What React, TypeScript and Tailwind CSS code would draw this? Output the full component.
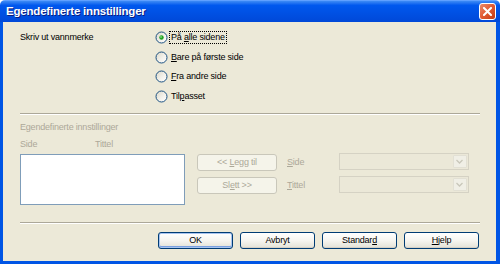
import React from "react";

const font = { fontFamily: '"Liberation Sans", Arial, sans-serif' };

function U({ children }: { children: React.ReactNode }) {
  return <span className="underline underline-offset-[1px]">{children}</span>;
}

function Radio({ checked }: { checked?: boolean }) {
  return (
    <svg width="13" height="13" viewBox="0 0 13 13" className="shrink-0">
      <defs>
        <linearGradient id={checked ? "rgc" : "rg"} x1="0" y1="0" x2="1" y2="1">
          <stop offset="0" stopColor="#DCD8C8" />
          <stop offset="0.6" stopColor="#F4F3EE" />
          <stop offset="1" stopColor="#FFFFFF" />
        </linearGradient>
      </defs>
      <circle cx="6.5" cy="6.5" r="5.5" fill={`url(#${checked ? "rgc" : "rg"})`} stroke="#1C5180" strokeWidth="1" />
      {checked && <circle cx="6.5" cy="6.5" r="2.2" fill="#21A121" />}
      {checked && <circle cx="6" cy="6" r="0.9" fill="#7FD97F" />}
    </svg>
  );
}

function RadioRow({ checked, children }: { checked?: boolean; children: React.ReactNode }) {
  return (
    <div className="h-[19.5px] flex items-center">
      <Radio checked={checked} />
      <span
        className={`ml-[2px] px-[1px] leading-[11px] ${checked ? "outline outline-1 outline-dotted outline-black" : ""}`}
      >
        {children}
      </span>
    </div>
  );
}

function Sep() {
  return <div className="border-t border-[#ACA899] border-b border-b-white" />;
}

function DisabledBtn({ children }: { children: React.ReactNode }) {
  return (
    <div className="w-[80px] h-[17px] rounded-[3px] border border-[#C9C7BA] bg-[#F5F4EA] text-[#ACA899] flex items-center justify-center">
      <span className="whitespace-pre">{children}</span>
    </div>
  );
}

function Combo() {
  return (
    <div className="w-[130px] h-[17px] border border-[#D5D2C4] bg-[#EBE8D8] flex justify-end items-stretch p-[1px]">
      <div className="w-[14px] border border-[#E2E0D4] bg-[#F0EFE6] rounded-[1px] flex items-center justify-center">
        <svg width="7" height="5" viewBox="0 0 7 5">
          <path d="M0.5 1 L3.5 4 L6.5 1" fill="none" stroke="#C9C7BA" strokeWidth="1.3" />
        </svg>
      </div>
    </div>
  );
}

function Btn({ children, def }: { children: React.ReactNode; def?: boolean }) {
  return (
    <div
      className={`w-[75px] h-[17px] rounded-[3px] border border-[#003C74] bg-gradient-to-b from-white via-[#F6F5F0] to-[#E3E1D6] flex items-center justify-center text-black ${
        def ? "shadow-[inset_0_0_0_1px_#A7C4F0,inset_0_-1px_0_1px_#7AA0E0]" : "shadow-[inset_0_-1px_0_#D6D0C5]"
      }`}
    >
      <span>{children}</span>
    </div>
  );
}

export default function App() {
  return (
    <div className="w-[500px] h-[264px] bg-white" style={font}>
      <div className="w-[500px] h-[264px] flex flex-col rounded-t-[5px] overflow-hidden">
        {/* Title bar */}
        <div className="h-[22px] shrink-0 flex items-center bg-gradient-to-b from-[#3D8BF5] via-[#0058EE] via-20% to-[#0048D8] border-t border-[#5FA0FF]">
          <span className="ml-[6px] text-white font-bold text-[11.5px] tracking-[-0.2px] [text-shadow:1px_1px_0_#0A1E80]">
            Egendefinerte innstillinger
          </span>
          <div className="ml-auto mr-[4px] w-[17px] h-[17px] rounded-[3px] border border-white bg-gradient-to-br from-[#E8896B] via-[#E15A31] to-[#C23B12] flex items-center justify-center">
            <svg width="9" height="9" viewBox="0 0 9 9">
              <path d="M1 1 L8 8 M8 1 L1 8" stroke="white" strokeWidth="2" strokeLinecap="square" />
            </svg>
          </div>
        </div>
        {/* Body */}
        <div className="flex-1 flex border-l-[3px] border-r-[4px] border-b-[3px] border-[#0055E5]">
          <div className="flex-1 bg-[#ECE9D8] pl-[17px] pr-[16px] flex flex-col text-[9px] tracking-[-0.2px] text-black">
            {/* Top section */}
            <div className="flex pt-[6px]">
              <div className="w-[135px] h-[19.5px] flex items-center">Skriv ut vannmerke</div>
              <div className="flex flex-col">
                <RadioRow checked>
                  På <U>a</U>lle sidene
                </RadioRow>
                <RadioRow>
                  <U>B</U>are på første side
                </RadioRow>
                <RadioRow>
                  <U>F</U>ra andre side
                </RadioRow>
                <RadioRow>
                  Til<U>p</U>asset
                </RadioRow>
              </div>
            </div>
            <div className="mt-[7px]">
              <Sep />
            </div>
            {/* Custom section */}
            <div className="mt-[6px] h-[13px] leading-[13px] text-[#ACA899]">Egendefinerte innstillinger</div>
            <div className="mt-[4px] h-[13px] leading-[13px] text-[#ACA899] flex">
              <span className="w-[75px]">Side</span>
              <span>Tittel</span>
            </div>
            <div className="mt-[3px] flex">
              <div className="w-[165px] h-[51px] border border-[#7F9DB9] bg-white" />
              <div className="ml-[12px] flex flex-col gap-[6px]">
                <DisabledBtn>
                  {"<< "}
                  <U>L</U>egg til
                </DisabledBtn>
                <DisabledBtn>
                  Sl<U>e</U>
                  {"tt >>"}
                </DisabledBtn>
              </div>
              <div className="ml-[10px] flex flex-col gap-[6px] text-[#ACA899]">
                <div className="h-[17px] flex items-center">
                  <span>
                    <U>S</U>ide
                  </span>
                </div>
                <div className="h-[17px] flex items-center">
                  <span>
                    <U>T</U>ittel
                  </span>
                </div>
              </div>
              <div className="ml-[34px] -mt-[1px] flex flex-col gap-[6px]">
                <Combo />
                <Combo />
              </div>
            </div>
            <div className="mt-[17px]">
              <Sep />
            </div>
            <div className="mt-[8px] flex justify-end gap-[7px] pr-[1px]">
              <Btn def>OK</Btn>
              <Btn>Avbryt</Btn>
              <Btn>
                Standar<U>d</U>
              </Btn>
              <Btn>
                <U>H</U>jelp
              </Btn>
            </div>
          </div>
        </div>
      </div>
    </div>
  );
}
